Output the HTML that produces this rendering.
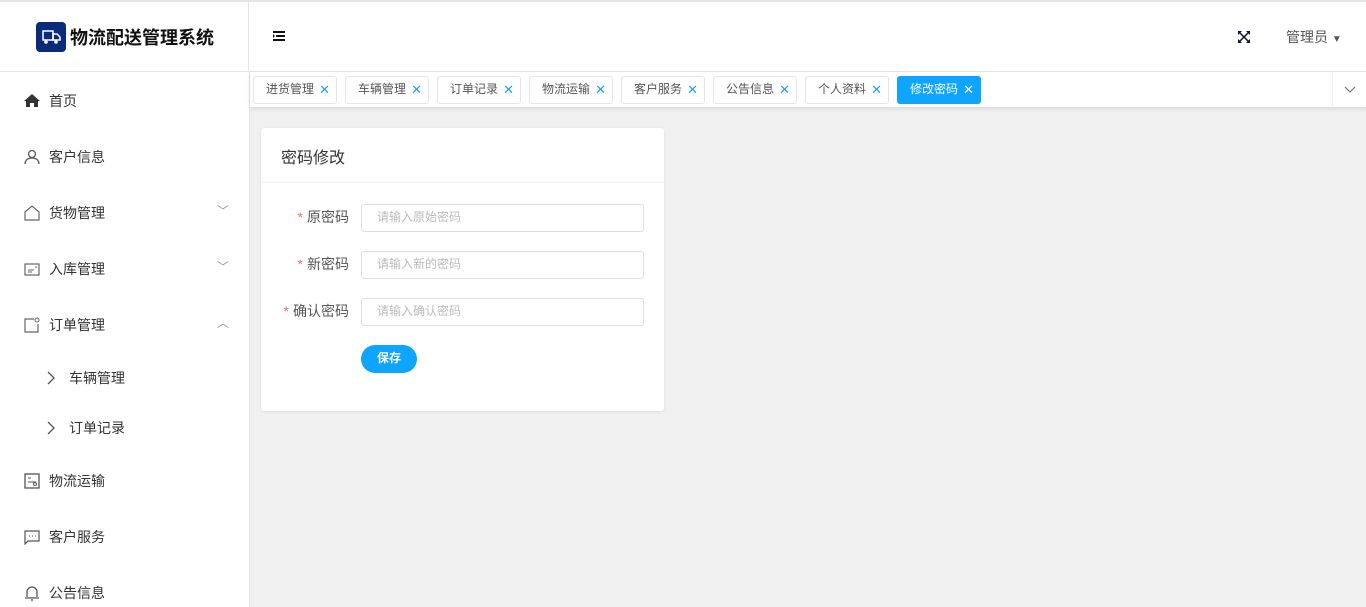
<!DOCTYPE html>
<html><head><meta charset="utf-8"><style>
*{box-sizing:border-box;margin:0;padding:0}
body{width:1366px;height:607px;overflow:hidden;background:#f0f0f0;font-family:"Liberation Sans","Noto Sans CJK SC",sans-serif;font-size:14px;color:#333;position:relative}
.top{position:absolute;left:0;top:0;width:1366px;height:72px;background:#fff;border-top:2px solid #e6e6e6;border-bottom:1px solid #e6e6e6}
.logo{position:absolute;left:0;top:0;width:249px;height:70px;border-right:1px solid #e6e6e6}
.logo .ic{position:absolute;left:36px;top:20px;width:30px;height:30px;background:#0c2a7a;border-radius:4px}
.logo .t{position:absolute;left:70px;top:22px;font-size:18px;font-weight:bold;color:#111}
.side{position:absolute;left:0;top:72px;width:250px;height:535px;background:#fff;border-right:1px solid #e6e6e6}
.mi{position:absolute;left:0;width:249px;height:20px;font-size:14px;color:#333}
.mi .lb{position:absolute;left:49px;top:-1px}
.mi svg{position:absolute;left:24px;top:1px}
.mi .ar{position:absolute;left:217px;top:-2px;color:#999;font-size:12px}
.tabs{position:absolute;left:250px;top:72px;width:1116px;height:35px;background:#fff;box-shadow:0 2px 4px rgba(0,0,0,.1)}
.tab{position:absolute;top:4px;width:84px;height:28px;border:1px solid #e6e6e6;border-radius:3px;font-size:12px;color:#555;line-height:25px;padding-left:12px;background:#fff}
.tab i{font-style:normal;color:#1e9fff;position:absolute;right:6px;top:0;font-size:13px}
.tab.act{background:#0ea5ff;color:#fff;border-color:#0ea5ff}
.tab.act i{color:#fff}
.card{position:absolute;left:261px;top:128px;width:403px;height:283px;background:#fff;border-radius:3px;box-shadow:0 1px 3px rgba(0,0,0,.08)}
.ch{height:55px;border-bottom:1px solid #eef0f4;padding:16px 20px;font-size:16px;color:#333}
.lbl{position:absolute;right:315px;font-size:14px;color:#555}
.lbl b{color:#f56c6c;font-weight:normal;margin-right:4px}
.inp{position:absolute;left:100px;width:283px;height:28px;border:1px solid #dcdfe6;border-radius:3px;font-size:12px;color:#bbb;padding-left:15px;line-height:25px}
.btn{position:absolute;left:100px;top:217px;width:56px;height:28px;border-radius:14px;background:#0ea5ff;color:#fff;font-size:12px;text-align:center;line-height:26px;font-weight:bold}
</style></head><body>
<div class="top">
 <div class="logo"><div class="ic"><svg width="30" height="30" viewBox="0 0 30 30"><rect x="7" y="9" width="10" height="9" fill="none" stroke="#fff" stroke-width="1.5"/><path d="M17 12h4l3 3v3h-7z" fill="none" stroke="#fff" stroke-width="1.5"/><circle cx="10" cy="20" r="1.8" fill="#fff"/><circle cx="20" cy="20" r="1.8" fill="#fff"/></svg></div><div class="t">物流配送管理系统</div></div>
 <svg style="position:absolute;left:273px;top:29px" width="13" height="11"><path d="M0 1h12M3 5h9M0 9h12" stroke="#111" stroke-width="2"/><path d="M0 3l2 2-2 2z" fill="#111"/></svg>
 <svg style="position:absolute;left:1238px;top:29px" width="12" height="12" viewBox="0 0 12 12"><path d="M1 1l10 10M11 1L1 11" stroke="#113" stroke-width="1.5"/><path d="M0 0h4L0 4zM12 0H8l4 4zM0 12h4L0 8zM12 12H8l4-4z" fill="#113"/></svg>
 <div style="position:absolute;left:1286px;top:25px;color:#555">管理员 <span style="font-size:10px">▼</span></div>
</div>
<div class="side">
 <div class="mi" style="top:20px"><svg width="16" height="15"><path d="M8 1L0 8h2v6h4v-4h4v4h4V8h2z" fill="#333"/></svg><span class="lb">首页</span></div>
 <div class="mi" style="top:76px"><svg width="16" height="16"><circle cx="8" cy="5" r="3.5" fill="none" stroke="#555" stroke-width="1.3"/><path d="M1 15c0-4 3-6 7-6s7 2 7 6" fill="none" stroke="#555" stroke-width="1.3"/></svg><span class="lb">客户信息</span></div>
 <div class="mi" style="top:132px"><svg width="16" height="16"><path d="M1 7l7-6 7 6v8H1z" fill="none" stroke="#666" stroke-width="1.2"/></svg><span class="lb">货物管理</span><span class="ar">﹀</span></div>
 <div class="mi" style="top:188px"><svg width="16" height="16"><rect x="1" y="3" width="14" height="11" fill="none" stroke="#666" stroke-width="1.2"/><path d="M4 9h6M4 11h4M11 6h2" stroke="#666"/></svg><span class="lb">入库管理</span><span class="ar">﹀</span></div>
 <div class="mi" style="top:244px"><svg width="16" height="16"><path d="M10 2H1v13h13V7" fill="none" stroke="#666" stroke-width="1.2"/><circle cx="13" cy="3" r="2" fill="none" stroke="#666"/></svg><span class="lb">订单管理</span><span class="ar">︿</span></div>
 <div class="mi" style="top:297px"><svg style="left:46px" width="10" height="16"><path d="M2 2l6 6-6 6" fill="none" stroke="#555" stroke-width="1.3"/></svg><span class="lb" style="left:69px">车辆管理</span></div>
 <div class="mi" style="top:347px"><svg style="left:46px" width="10" height="16"><path d="M2 2l6 6-6 6" fill="none" stroke="#555" stroke-width="1.3"/></svg><span class="lb" style="left:69px">订单记录</span></div>
 <div class="mi" style="top:400px"><svg width="16" height="16"><rect x="1" y="1" width="14" height="14" fill="none" stroke="#555" stroke-width="1.3"/><path d="M4 5h3M4 9h8" stroke="#555"/><circle cx="11" cy="11" r="1.5" fill="none" stroke="#555"/></svg><span class="lb">物流运输</span></div>
 <div class="mi" style="top:456px"><svg width="16" height="16"><path d="M1 2h14v10H4l-3 3z" fill="none" stroke="#555" stroke-width="1.2"/><path d="M5 7h1M8 7h1M11 7h1" stroke="#555"/></svg><span class="lb">客户服务</span></div>
 <div class="mi" style="top:512px"><svg width="16" height="16"><path d="M3 12V7a5 5 0 0110 0v5M1 13h14M7 15h2" fill="none" stroke="#555" stroke-width="1.3"/></svg><span class="lb">公告信息</span></div>
</div>
<div class="tabs">
 <div class="tab" style="left:3px">进货管理<i>✕</i></div>
 <div class="tab" style="left:95px">车辆管理<i>✕</i></div>
 <div class="tab" style="left:187px">订单记录<i>✕</i></div>
 <div class="tab" style="left:279px">物流运输<i>✕</i></div>
 <div class="tab" style="left:371px">客户服务<i>✕</i></div>
 <div class="tab" style="left:463px">公告信息<i>✕</i></div>
 <div class="tab" style="left:555px">个人资料<i>✕</i></div>
 <div class="tab act" style="left:647px">修改密码<i>✕</i></div>
 <div style="position:absolute;left:1082px;top:0;width:34px;height:35px;border-left:1px solid #eee;background:#fff"><svg style="position:absolute;left:11px;top:14px" width="12" height="8"><path d="M1 1l5 5 5-5" fill="none" stroke="#777" stroke-width="1.2"/></svg></div>
</div>
<div class="card">
 <div class="ch">密码修改</div>
 <div class="lbl" style="top:79px"><b>*</b>原密码</div><div class="inp" style="top:76px">请输入原始密码</div>
 <div class="lbl" style="top:126px"><b>*</b>新密码</div><div class="inp" style="top:123px">请输入新的密码</div>
 <div class="lbl" style="top:173px"><b>*</b>确认密码</div><div class="inp" style="top:170px">请输入确认密码</div>
 <div class="btn">保存</div>
</div>
</body></html>
